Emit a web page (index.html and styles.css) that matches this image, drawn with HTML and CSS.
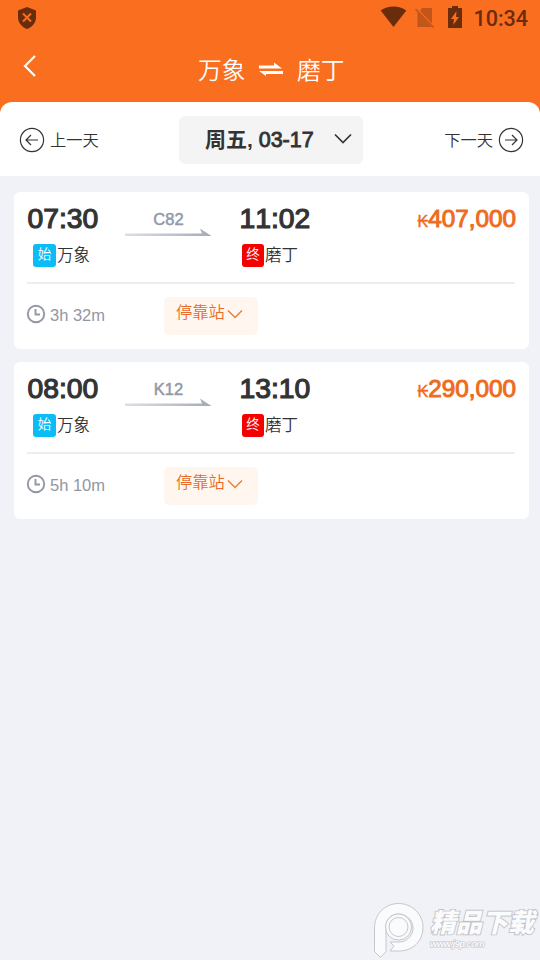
FILE: index.html
```html
<!DOCTYPE html>
<html lang="zh-CN">
<head>
<meta charset="utf-8">
<title>万象 ⇌ 磨丁</title>
<link rel="stylesheet" href="styles.css">
</head>
<body>
<header class="header">
  <div class="status">
    <svg class="shield" width="20" height="24" viewBox="0 0 20 24"><path d="M10 1 19 4.500V11c0 6-4 10-9 12C5 21 1 17 1 11V4.500Z" fill="#692c0c"/><path d="m6 7.500 8 8m0-8-8 8" stroke="#fa6e20" stroke-width="2"/></svg>
    <svg class="wifi" width="27" height="22" viewBox="0 0 27 22"><path d="M.7 4.500C8-.7 19-.7 26.300 4.500L13.500 21Z" fill="#692c0c"/></svg>
    <svg class="sim" width="20" height="22" viewBox="0 0 20 22"><path d="M7 1h10v15.500L5 4ZM2.500 5 17 20H2.500Z" fill="#c2551a"/><path d="m.5 2 18 18.500" stroke="#c2551a" stroke-width="1.600"/></svg>
    <svg class="battery" width="14" height="22" viewBox="0 0 14 22"><path d="M4 0h6v2h4v20H0V2h4Z" fill="#692c0c"/><path d="M8.500 5 3 13h3l-.8 6L11 11H8Z" fill="#fa6e20"/></svg>
    <span class="clock">10:34</span>
  </div>
  <div class="nav">
    <svg class="back" width="14" height="22" viewBox="0 0 14 22"><path d="M12 1 2 11l10 10" fill="none" stroke="#fff" stroke-width="2.200"/></svg>
    <h1 class="title"><span>万象</span><svg width="26" height="16" viewBox="0 0 26 16"><path d="M1 3.600h15V.5l8 6.100H1ZM25 9H1l7 5v-2h17Z" fill="#fff"/></svg><span>磨丁</span></h1>
  </div>
</header>
<section class="days">
  <div class="day"><svg width="26" height="26" viewBox="0 0 26 26"><circle cx="13" cy="13" r="11.600"/><path d="M19 13H7m5-5-5 5 5 5"/></svg><span>上一天</span></div>
  <div class="date"><span class="label">周五, <span class="digits">03-17</span></span><svg width="18" height="12" viewBox="0 0 18 12"><path d="m1 1.500 8 8 8-8"/></svg></div>
  <div class="day"><span>下一天</span><svg width="26" height="26" viewBox="0 0 26 26"><circle cx="13" cy="13" r="11.600"/><path d="M7 13h12m-5-5 5 5-5 5"/></svg></div>
</section>
<main class="trips">
  <article class="card">
    <div class="route">
      <div class="stop"><b class="time">07:30</b><div class="station"><i class="tag start">始</i><span>万象</span></div></div>
      <div class="train"><span>C82</span><svg width="88" height="10" viewBox="0 0 88 10"><defs><linearGradient id="g1"><stop stop-color="#dcdfe5"/><stop offset="1" stop-color="#a4abb6"/></linearGradient></defs><path d="M0 5.500h77L75 .5 86.500 8H0Z" fill="url(#g1)"/></svg></div>
      <div class="stop end"><b class="time">11:02</b><div class="station"><i class="tag last">终</i><span>磨丁</span></div></div>
      <div class="price"><span class="kip">₭</span>407,000</div>
    </div>
    <div class="details">
      <div class="duration"><svg width="20" height="20" viewBox="0 0 20 20"><circle cx="10" cy="10" r="8.200"/><path d="M9.500 5v5.500H14"/></svg>3h 32m</div>
      <div class="stops">停靠站<svg width="16" height="10" viewBox="0 0 16 10"><path d="m1 1.500 7 7 7-7"/></svg></div>
    </div>
  </article>
  <article class="card">
    <div class="route">
      <div class="stop"><b class="time">08:00</b><div class="station"><i class="tag start">始</i><span>万象</span></div></div>
      <div class="train"><span>K12</span><svg width="88" height="10" viewBox="0 0 88 10"><path d="M0 5.500h77L75 .5 86.500 8H0Z" fill="url(#g1)"/></svg></div>
      <div class="stop end"><b class="time">13:10</b><div class="station"><i class="tag last">终</i><span>磨丁</span></div></div>
      <div class="price"><span class="kip">₭</span>290,000</div>
    </div>
    <div class="details">
      <div class="duration"><svg width="20" height="20" viewBox="0 0 20 20"><circle cx="10" cy="10" r="8.200"/><path d="M9.500 5v5.500H14"/></svg>5h 10m</div>
      <div class="stops">停靠站<svg width="16" height="10" viewBox="0 0 16 10"><path d="m1 1.500 7 7 7-7"/></svg></div>
    </div>
  </article>
</main>
<div class="watermark">
  <svg width="51" height="57" viewBox="0 0 51 57"><path d="M1.500 26C1.500 12 12 1.500 25.500 1.500S50 12 50 25.500 40 49 26 49h-9l4-5-4-4h9c7 0 14-6 14-14S33 12 25.500 12 13 17 13 25v24.500l-5.500 6-6-6Z"/><circle cx="25.500" cy="25" r="13"/><circle cx="25.500" cy="25" r="9.500"/></svg>
  <div class="brand"><span class="name">精品下载</span><span class="url">www.j9p.com</span></div>
</div>
</body>
</html>
```
FILE: styles.css
```css
* { box-sizing: border-box; }
body { margin: 0; width: 540px; height: 960px; overflow: hidden; position: relative; background: #f0f2f8; color: #333; font-family: "Liberation Sans", "Noto Sans CJK SC", sans-serif; font-kerning: none; }
svg { display: block; flex: none; }
.header { height: 114px; background: #fa6e20; }
.status { height: 36px; display: flex; align-items: center; padding: 0 12px 0 17px; color: #692c0c; }
.wifi { margin: -3px 8px 0 auto; }
.sim { margin: -1px 13px 0 0; }
.battery { margin: -2px 11px 0 0; }
.clock { font: 500 21.500px/36px Roboto, sans-serif; padding-top: 2px; }
.nav { height: 66px; display: flex; align-items: center; }
.back { margin: -7px 0 0 23px; }
.title { margin: 3px 0 0 161px; color: #fff; display: flex; align-items: center; font-size: 23.700px; font-weight: 350; line-height: 36px; gap: 13px; }
.title span { width: 47px; white-space: nowrap; }
.title svg { margin-top: -1px; }
.days { height: 74px; margin-top: -12px; background: #fff; border-radius: 12px 12px 0 0; display: grid; grid-template-columns: 160px 184px 1fr; padding: 2px 16px 0 19px; align-items: center; }
.day { display: flex; align-items: center; gap: 5px; font-size: 16.300px; font-weight: 350; }
.day span { margin-top: -2px; }
.day svg { fill: none; stroke: #333; stroke-width: 1.200; }
.day:last-child { justify-content: flex-end; }
.date { height: 48px; background: #f4f4f4; border-radius: 6px; display: flex; align-items: center; padding: 0 11px 0 26px; justify-content: space-between; font-size: 21px; font-weight: 700; white-space: nowrap; }
.label { margin-top: -4px; }
.digits { font-size: 21.500px; font-weight: 400; -webkit-text-stroke: .9px #333; }
.date svg { fill: none; stroke: #333; stroke-width: 1.700; margin-top: -2px; }
.trips { padding: 16px 11px 0 14px; display: grid; gap: 13px; }
.card { height: 157px; border-radius: 6px; background: #fff; padding: 0 14px 0 13px; }
.route { height: 92px; border-bottom: 2px solid #ededf0; display: grid; grid-template-columns: 98px 114px 100px 1fr; }
.stop { padding-top: 10px; }
.time { display: block; font-size: 28.300px; font-weight: 400; line-height: 32px; height: 32px; -webkit-text-stroke: 1.200px #333; margin-left: .5px; }
.station { display: flex; align-items: center; height: 23px; margin: 10px 0 0 6px; font-size: 16.500px; white-space: nowrap; font-weight: 350; }
.station span { margin-top: -3px; }
.end .station { margin-left: 3px; }
.tag { width: 23px; height: 23px; margin-right: 1px; border-radius: 3px; font-size: 13.500px; line-height: 21px; font-style: normal; text-align: center; color: #fff; }
.start { background: #0cbcf6; }
.last { background: #f40000; width: 22px; }
.train { padding-top: 18px; color: #9299a8; font-size: 16.500px; line-height: 19px; -webkit-text-stroke: .5px #9299a8; }
.train span { display: block; text-align: center; width: 87px; }
.train svg { margin-top: -1px; }
.price { padding-top: 11px; margin-right: -1px; text-align: right; white-space: nowrap; color: #ee6c20; font-size: 24.300px; line-height: 32px; -webkit-text-stroke: 1px #ee6c20; }
.kip { font-size: 16px; -webkit-text-stroke: .4px #ee6c20; }
.details { display: grid; grid-template-columns: 137px 94px; }
.duration { display: flex; align-items: center; gap: 4px; height: 38px; margin: 12px 0 0 -1px; font-size: 16.500px; color: #9297a5; }
.duration svg { fill: none; stroke: #9297a5; stroke-width: 1.900; margin-top: -3px; }
.stops { display: flex; align-items: center; gap: 3px; height: 38px; margin-top: 13px; padding: 0 0 10px 12px; border-radius: 5px; background: #fff6f0; color: #e8692a; font-size: 16.300px; font-weight: 350; }
.stops svg { fill: none; stroke: #ec8038; stroke-width: 1.500; margin: 6px 0 0 -1px; }
.watermark { position: absolute; left: 373px; top: 902px; display: flex; color: #fafbfc; }
.watermark svg { fill: #fafbfc; stroke: #c5c7cc; stroke-width: 1; }
.brand { display: flex; flex-direction: column; padding: 7px 0 0 6px; font-weight: 900; font-style: italic; paint-order: stroke; -webkit-text-stroke: 1.800px #c0c2c7; }
.name { font-size: 26px; line-height: 28px; height: 29px; white-space: nowrap; }
.url { font-size: 9.500px; line-height: 11px; letter-spacing: -.6px; -webkit-text-stroke: 1.200px #c0c2c7; }
```
